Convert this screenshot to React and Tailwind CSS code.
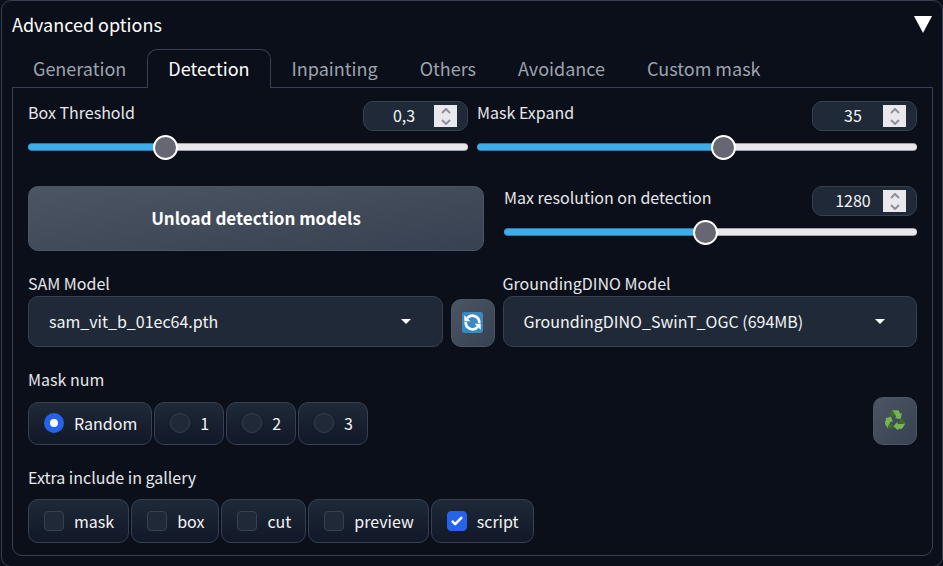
import { useState } from "react";

const TABS = ["Generation", "Detection", "Inpainting", "Others", "Avoidance", "Custom mask"];
const MASK_NUMS = ["Random", "1", "2", "3"];
const GALLERY = ["mask", "box", "cut", "preview", "script"];

const LABEL = "block leading-[22px] text-[#e5e7eb]";
const CHOICE =
  "flex items-center gap-[10px] rounded-[10px] border border-[#374151] bg-linear-to-b from-[#1f2937] to-[#111827] pr-[14px] pb-px pl-[15px] text-[#f3f4f6]";
const SECONDARY = "rounded-[10px] border border-[#4b5563] bg-linear-to-br from-[#4b5563] to-[#374151]";

function Spinner({ label, onStep }) {
  return (
    <span className="flex h-[22px] w-[23px] shrink-0 flex-col bg-[#e9e9ed] text-[#8f8f9d]">
      <button type="button" aria-label={`Increase ${label}`} onClick={() => onStep(1)} className="flex flex-1 items-center justify-center">
        <svg viewBox="0 0 10 6" className="h-[6px] w-[10px]" fill="none" stroke="currentColor" strokeWidth="2">
          <path d="M1 5l4-4 4 4" />
        </svg>
      </button>
      <button type="button" aria-label={`Decrease ${label}`} onClick={() => onStep(-1)} className="flex flex-1 items-center justify-center">
        <svg viewBox="0 0 10 6" className="h-[6px] w-[10px]" fill="none" stroke="currentColor" strokeWidth="2">
          <path d="M1 1l4 4 4-4" />
        </svg>
      </button>
    </span>
  );
}

function SliderField({ id, label, min, max, step, initial }) {
  const [value, setValue] = useState(initial);
  const clamp = (n) => Math.min(max, Math.max(min, Math.round(n * 100) / 100));
  const percent = ((value - min) / (max - min)) * 100;
  return (
    <div className="min-w-0 flex-1">
      <div className="flex items-start justify-between">
        <label htmlFor={id} className={LABEL}>{label}</label>
        <div className="flex h-[30px] w-[105px] items-center rounded-[10px] border border-[#374151] bg-[#1f2937] px-[10px]">
          <input
            type="text"
            inputMode="decimal"
            aria-label={`${label} value`}
            value={String(value).replace(".", ",")}
            onChange={(e) => setValue(clamp(Number(e.target.value.replace(",", ".")) || 0))}
            className="w-full min-w-0 bg-transparent pb-[2px] text-center leading-[22px] text-[#f3f4f6] outline-none"
          />
          <Spinner label={label} onStep={(d) => setValue(clamp(value + d * step))} />
        </div>
      </div>
      <input
        id={id}
        type="range"
        min={min}
        max={max}
        step={step}
        value={value}
        onChange={(e) => setValue(Number(e.target.value))}
        style={{ backgroundImage: `linear-gradient(to right, #3daee9 ${percent}%, #e9e7ec ${percent}%)` }}
        className="mt-3 block h-2 w-full appearance-none rounded-full border-y border-black/30 bg-origin-border outline-none [&::-webkit-slider-thumb]:size-[25px] [&::-webkit-slider-thumb]:appearance-none [&::-webkit-slider-thumb]:rounded-full [&::-webkit-slider-thumb]:border-2 [&::-webkit-slider-thumb]:border-solid [&::-webkit-slider-thumb]:border-white [&::-webkit-slider-thumb]:bg-[#676774]"
      />
    </div>
  );
}

function SelectField({ id, label, options }) {
  return (
    <div className="min-w-0 flex-1">
      <label htmlFor={id} className={LABEL}>{label}</label>
      <div className="mt-[2px] grid items-center">
        <select
          id={id}
          className="col-start-1 row-start-1 h-[51px] w-full appearance-none rounded-[10px] border border-[#374151] bg-[#1f2937] px-5 pb-[2px] text-[#f3f4f6] outline-none"
        >
          {options.map((o) => (
            <option key={o}>{o}</option>
          ))}
        </select>
        <svg viewBox="0 0 10 5" className="pointer-events-none col-start-1 row-start-1 mr-8 h-[5px] w-[10px] justify-self-end" fill="#fff">
          <path d="M0 0h10L5 5z" />
        </svg>
      </div>
    </div>
  );
}

function ToolButton({ label, children }) {
  return (
    <button
      type="button"
      aria-label={label}
      className={`flex h-12 w-11 shrink-0 items-center justify-center pb-[2px] ${SECONDARY}`}
    >
      {children}
    </button>
  );
}

function RefreshIcon() {
  return (
    <svg viewBox="0 0 36 36" className="size-[21px]">
      <rect width="36" height="36" rx="4" fill="#3b88c3" />
      <g fill="none" stroke="#fff" strokeWidth="4.6">
        <path d="M9 10.500A11.700 11.700 0 0 1 29.600 19" />
        <path d="M27 25.500A11.700 11.700 0 0 1 6.400 17" />
      </g>
      <path d="M4 5.500V16h10.500z" fill="#fff" />
      <path d="M32 30.500V20H21.500z" fill="#fff" />
    </svg>
  );
}

function RecycleIcon() {
  return (
    <svg viewBox="136 90 60 60" className="size-5">
      {[0, 120, 240].map((angle) => (
        <g key={angle} transform={`rotate(${angle} 166 122)`}>
          <path d="M156 92l-6 12 10 7 8-13z" fill="#3e721d" />
          <path d="M156 91h17q4 0 6 4l3 6 5-2-4 19-19-4 6-3-6-12q-3-6-8-8z" fill="#77b255" />
        </g>
      ))}
    </svg>
  );
}

export default function App() {
  const [tab, setTab] = useState("Detection");
  const [open, setOpen] = useState(true);
  return (
    <div className="min-h-screen bg-[#0b0f19] pl-px font-['Noto_Sans_CJK_SC','Noto_Sans',sans-serif] text-base text-[#f3f4f6]">
      <section className="rounded-[10px] border border-[#374151] pr-[9px] pb-[10px] pl-[10px]">
        <button
          type="button"
          aria-expanded={open}
          onClick={() => setOpen(!open)}
          className="flex h-12 w-full items-center justify-between pr-px pb-px text-lg text-white"
        >
          <span className="pb-[2px]">Advanced options</span>
          <svg viewBox="0 0 18 17" className="h-[17px] w-[18px]" fill="#fff">
            <path d="M0 0h18L9 17z" />
          </svg>
        </button>

        {open && (
          <>
            <div role="tablist" className="flex">
              {TABS.map((t) => (
                <button
                  key={t}
                  type="button"
                  role="tab"
                  aria-selected={t === tab}
                  onClick={() => setTab(t)}
                  className={
                    t === tab
                      ? "z-10 -mb-px h-[39px] rounded-t-[10px] border border-b-0 border-[#374151] bg-[#0b0f19] px-5 pb-[2px] text-lg text-white"
                      : "-mb-px h-[39px] border border-b-0 border-transparent px-5 pb-[2px] text-lg text-[#9ca3af]"
                  }
                >
                  {t}
                </button>
              ))}
            </div>

            <div role="tabpanel" className="rounded-b-[10px] border border-[#374151] px-[15px] pt-[13px] pb-3">
              <div className="flex gap-[9px]">
                <SliderField id="box" label="Box Threshold" min={0} max={1} step={0.01} initial={0.3} />
                <SliderField id="expand" label="Mask Expand" min={0} max={62} step={1} initial={35} />
              </div>

              <div className="mt-[35px] grid grid-cols-[456fr_413fr] gap-5">
                <button type="button" className={`h-[65px] pb-[2px] text-[17px] font-semibold text-white ${SECONDARY}`}>
                  Unload detection models
                </button>
                <SliderField id="res" label="Max resolution on detection" min={64} max={2560} step={1} initial={1280} />
              </div>

              <div className="mt-[21px] flex items-end gap-2">
                <SelectField id="sam" label="SAM Model" options={["sam_vit_b_01ec64.pth"]} />
                <ToolButton label="Refresh models"><RefreshIcon /></ToolButton>
                <SelectField id="dino" label="GroundingDINO Model" options={["GroundingDINO_SwinT_OGC (694MB)"]} />
              </div>

              <div className="mt-[21px] flex items-end justify-between">
                <fieldset>
                  <legend className={LABEL}>Mask num</legend>
                  <div className="mt-3 flex gap-[2px]">
                    {MASK_NUMS.map((m) => (
                      <label key={m} className={`h-[43px] ${CHOICE}`}>
                        <input
                          type="radio"
                          name="mask-num"
                          defaultChecked={m === "Random"}
                          className="size-5 appearance-none rounded-full border border-[#374151] bg-[#1f2937] checked:border-[6px] checked:border-[#2563eb] checked:bg-white"
                        />
                        {m}
                      </label>
                    ))}
                  </div>
                </fieldset>
                <ToolButton label="Recycle masks"><RecycleIcon /></ToolButton>
              </div>

              <fieldset className="mt-[21px]">
                <legend className={LABEL}>Extra include in gallery</legend>
                <div className="mt-[11px] flex gap-[2px]">
                  {GALLERY.map((g) => (
                    <label key={g} className={`h-11 ${CHOICE}`}>
                      <span className="grid place-items-center">
                        <input
                          type="checkbox"
                          defaultChecked={g === "script"}
                          className="peer col-start-1 row-start-1 size-5 appearance-none rounded border border-[#374151] bg-[#1f2937] checked:border-[#2563eb] checked:bg-[#2563eb]"
                        />
                        <svg
                          viewBox="0 0 16 16"
                          className="pointer-events-none invisible col-start-1 row-start-1 size-5 peer-checked:visible"
                          fill="#fff"
                        >
                          <path d="M12.207 4.793a1 1 0 0 1 0 1.414l-5 5a1 1 0 0 1-1.414 0l-2-2a1 1 0 0 1 1.414-1.414L6.500 9.086l4.293-4.293a1 1 0 0 1 1.414 0z" />
                        </svg>
                      </span>
                      {g}
                    </label>
                  ))}
                </div>
              </fieldset>
            </div>
          </>
        )}
      </section>
    </div>
  );
}
